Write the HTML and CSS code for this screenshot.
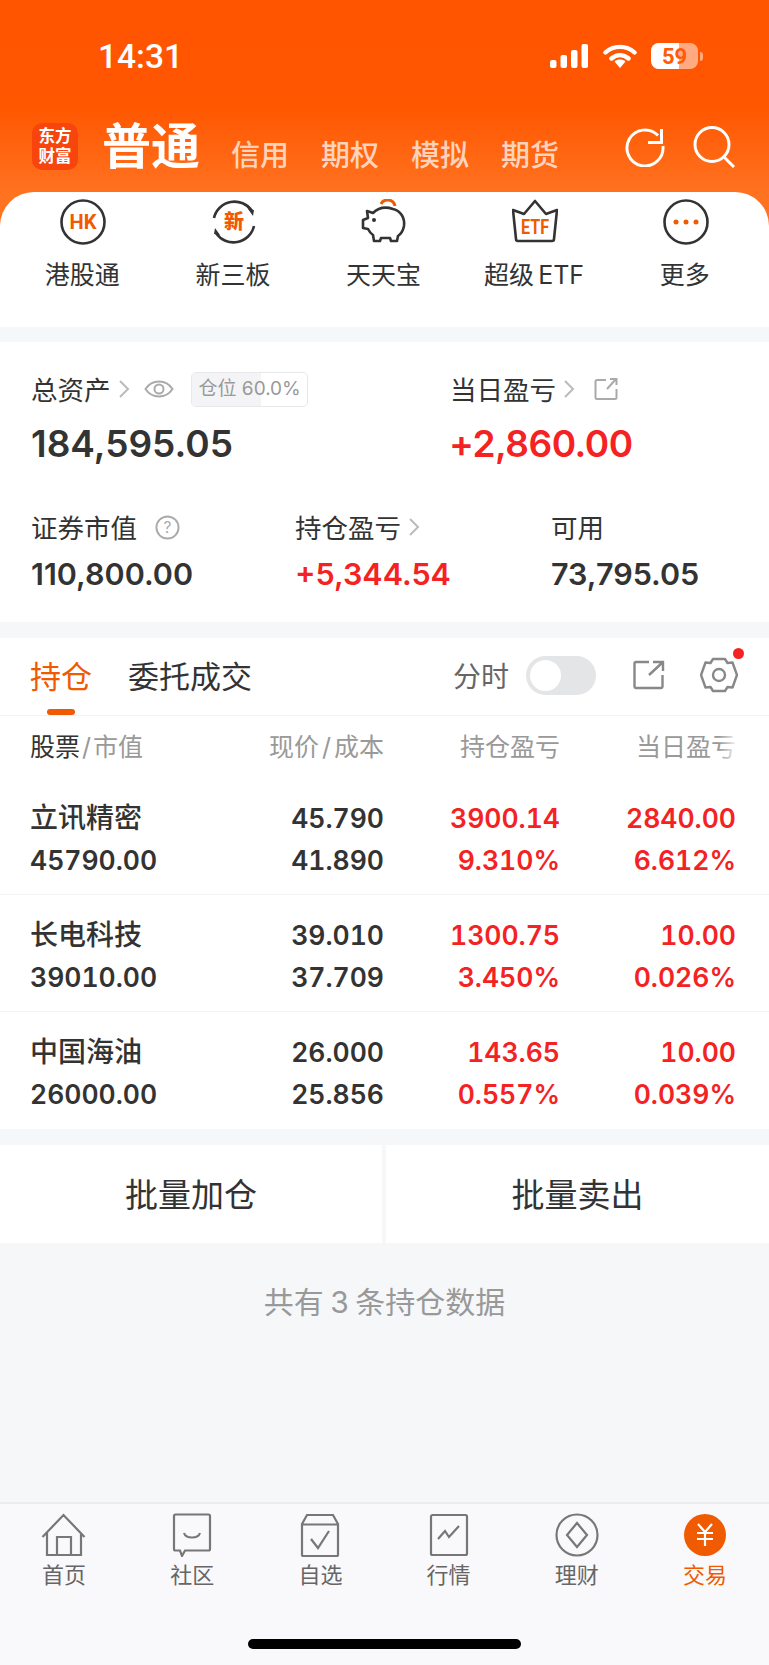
FILE: index.html
```html
<!DOCTYPE html>
<html lang="zh">
<head>
<meta charset="utf-8">
<title>交易</title>
<link rel="stylesheet" href="styles.css">
</head>
<body>
<div class="app">
  <header class="top">
    <div class="status">
      <span class="time">14:31</span>
      <div class="status-icons">
        <svg class="i-signal" viewBox="0 0 38 24"><rect x="0" y="16" width="6.5" height="8" rx="2"/><rect x="10.5" y="11" width="6.5" height="13" rx="2"/><rect x="21" y="6" width="6.5" height="18" rx="2"/><rect x="31.5" y="0" width="6.5" height="24" rx="2"/></svg>
        <svg class="i-wifi" viewBox="0 0 34 24"><path d="M2.5 8.5C10.5 1 23.5 1 31.5 8.5M8.5 14.5C13.5 10 20.5 10 25.5 14.5" fill="none" stroke="#fff" stroke-width="4.4" stroke-linecap="round"/><path d="M17 24l-5.5-6.5c3-2.6 8-2.6 11 0z" fill="#fff"/></svg>
        <div class="battery"><div class="battery-body"><span class="battery-fill"></span><span class="battery-text">59</span></div><span class="battery-nub"></span></div>
      </div>
    </div>
    <div class="brand-row">
      <div class="logo"><span>东方</span><span>财富</span></div>
      <span class="acct-main">普通</span>
      <nav class="acct-tabs"><span>信用</span><span>期权</span><span>模拟</span><span>期货</span></nav>
      <div class="top-actions">
        <svg class="i-refresh" viewBox="0 0 40 40"><path d="M33 8.5A18 18 0 1 0 37.900 19" fill="none" stroke="#fff" stroke-width="3"/><path d="M36.500 2V15.500H23" fill="none" stroke="#fff" stroke-width="3"/></svg>
        <svg class="i-search" viewBox="0 0 42 42"><ellipse cx="19" cy="18.5" rx="17" ry="17" fill="none" stroke="#fff" stroke-width="3"/><path d="M31 31l10 10" fill="none" stroke="#fff" stroke-width="3"/></svg>
      </div>
    </div>
  </header>

  <section class="quick">
    <div class="quick-item">
      <svg class="q-icon" viewBox="0 0 46 46"><circle cx="23" cy="23" r="21.5" class="s-dark"/><text x="23" y="30" textLength="27" lengthAdjust="spacingAndGlyphs" class="t-hk">HK</text></svg>
      <span>港股通</span>
    </div>
    <div class="quick-item">
      <svg class="q-icon" viewBox="0 0 46 46"><path d="M3 19A21 21 0 0 1 41 12M43 27A21 21 0 0 1 5 34" class="s-dark"/><path d="M37 10l6 1-1 6zM9 36l-6-1 1-6z" fill="#333"/><text x="23" y="30" class="t-xin">新</text></svg>
      <span>新三板</span>
    </div>
    <div class="quick-item">
      <svg class="q-icon" viewBox="0 0 46 46"><path d="M20 5a7.500 7.500 0 0 1 14 2" fill="none" stroke="#f05a00" stroke-width="3"/><path d="M7 19l-1-7 6 2c6-6 14-6 20-4 8 2 12 9 11 17-1 5-3 8-6 10l-1 5h-6l-1-3h-9l-1 3h-6l-1-6c-3-2-4-4-5-6l-5-1v-8z" class="s-dark-thin"/><circle cx="13" cy="21" r="2" fill="#333"/></svg>
      <span>天天宝</span>
    </div>
    <div class="quick-item">
      <svg class="q-icon" viewBox="0 0 46 46"><path d="M1 11l11 4L23 2l11 13 11-4-3 29a2 2 0 0 1-2 2H6a2 2 0 0 1-2-2z" class="s-dark-thin"/><text x="23" y="35" textLength="28" lengthAdjust="spacingAndGlyphs" class="t-etf">ETF</text></svg>
      <span class="tight">超级 ETF</span>
    </div>
    <div class="quick-item">
      <svg class="q-icon" viewBox="0 0 46 46"><circle cx="23" cy="23" r="21.500" class="s-dark"/><circle cx="13" cy="23" r="2.500" fill="#f05a00"/><circle cx="23" cy="23" r="2.500" fill="#f05a00"/><circle cx="33" cy="23" r="2.500" fill="#f05a00"/></svg>
      <span>更多</span>
    </div>
  </section>

  <section class="assets">
    <div class="assets-top">
      <div class="cell cell-total">
        <div class="label">总资产
          <svg class="chev" viewBox="0 0 12 20"><path d="M2 2l8 8-8 8"/></svg>
          <svg class="i-eye" viewBox="0 0 30 20"><path d="M1.500 10C8 0 22 0 28.500 10 22 20 8 20 1.500 10z" class="s-gray"/><circle cx="15" cy="10" r="4.500" class="s-gray"/></svg>
          <span class="tag"><span class="tag-fill"></span><span class="tag-text">仓位 60.0%</span></span>
        </div>
        <div class="big">184,595.05</div>
      </div>
      <div class="cell cell-day">
        <div class="label">当日盈亏
          <svg class="chev" viewBox="0 0 12 20"><path d="M2 2l8 8-8 8"/></svg>
          <svg class="i-share-sm" viewBox="0 0 24 24"><path d="M12 3H3a1.500 1.500 0 0 0-1.500 1.500v16A1.500 1.500 0 0 0 3 22h18a1.500 1.500 0 0 0 1.500-1.500V12M13 12L22 2M16 2h6.500v6" class="s-gray"/></svg>
        </div>
        <div class="big red">+2,860.00</div>
      </div>
    </div>
    <div class="assets-bottom">
      <div class="cell">
        <div class="label">证券市值
          <svg class="i-help" viewBox="0 0 26 26"><circle cx="13" cy="13" r="11.500" class="s-gray"/><text x="13" y="19" class="t-help">?</text></svg>
        </div>
        <div class="mid">110,800.00</div>
      </div>
      <div class="cell">
        <div class="label">持仓盈亏
          <svg class="chev" viewBox="0 0 12 20"><path d="M2 2l8 8-8 8"/></svg>
        </div>
        <div class="mid red">+5,344.54</div>
      </div>
      <div class="cell">
        <div class="label">可用</div>
        <div class="mid">73,795.05</div>
      </div>
    </div>
  </section>

  <section class="holdings">
    <div class="tabs">
      <div class="tab tab-on">持仓</div>
      <div class="tab">委托成交</div>
      <div class="tab-tools">
        <span class="fen">分时</span>
        <span class="toggle"><span class="knob"></span></span>
        <svg class="i-share" viewBox="0 0 32 30"><path d="M16 2H3a1.500 1.500 0 0 0-1.500 1.500v23A1.500 1.500 0 0 0 3 28h25a1.500 1.500 0 0 0 1.500-1.500V15M16 15L30 2M20 2h10v9" class="s-mid"/></svg>
        <span class="gear-wrap">
          <svg class="i-gear" viewBox="0 0 38 36"><path d="M13 2h12l2.500 4 5-.5L37 18l-4.500 12.500-5-.5-2.500 4H13l-2.500-4-5 .5L1 18 5.500 5.500l5 .5z" class="s-mid" stroke-linejoin="round"/><ellipse cx="19" cy="18" rx="6" ry="6" class="s-mid"/></svg>
          <span class="dot"></span>
        </span>
      </div>
    </div>
    <div class="thead">
      <div class="th-name"><span class="dark">股票</span><i>/</i>市值</div>
      <div>现价<i>/</i>成本</div>
      <div>持仓盈亏</div>
      <div class="th-fade">当日盈亏</div>
    </div>
    <div class="row">
      <div class="c-name"><b>立讯精密</b><span>45790.00</span></div>
      <div class="c-num"><span>45.790</span><span>41.890</span></div>
      <div class="c-num red"><span>3900.14</span><span>9.310%</span></div>
      <div class="c-num red"><span>2840.00</span><span>6.612%</span></div>
    </div>
    <div class="row">
      <div class="c-name"><b>长电科技</b><span>39010.00</span></div>
      <div class="c-num"><span>39.010</span><span>37.709</span></div>
      <div class="c-num red"><span>1300.75</span><span>3.450%</span></div>
      <div class="c-num red"><span>10.00</span><span>0.026%</span></div>
    </div>
    <div class="row">
      <div class="c-name"><b>中国海油</b><span>26000.00</span></div>
      <div class="c-num"><span>26.000</span><span>25.856</span></div>
      <div class="c-num red"><span>143.65</span><span>0.557%</span></div>
      <div class="c-num red"><span>10.00</span><span>0.039%</span></div>
    </div>
  </section>

  <section class="batch">
    <div>批量加仓</div>
    <div>批量卖出</div>
  </section>

  <p class="count">共有 3 条持仓数据</p>

  <footer class="bottom">
    <nav class="tabbar">
      <div class="bar-item">
        <svg viewBox="0 0 46 44"><path d="M1.500 24L22.500 2l21 22M6 20v22h34V20M16 42V24h14v18" class="s-nav"/></svg>
        <span>首页</span>
      </div>
      <div class="bar-item">
        <svg viewBox="0 0 46 44"><path d="M5 3a1.500 1.500 0 0 1 1.500-1.500h33A1.500 1.500 0 0 1 41 3v33a1.500 1.500 0 0 1-1.500 1.500H16L13 43l-2-5.500H6.500A1.500 1.500 0 0 1 5 36z" class="s-nav"/><path d="M15 20c2 6 14 6 16 0" class="s-nav"/></svg>
        <span>社区</span>
      </div>
      <div class="bar-item">
        <svg viewBox="0 0 46 44"><path d="M5 11.500h36M5 42V11L10 2h26l5 9v31a1 1 0 0 1-1 1H6a1 1 0 0 1-1-1z" class="s-nav"/><path d="M14 26l7 9 11-17" class="s-nav"/></svg>
        <span>自选</span>
      </div>
      <div class="bar-item">
        <svg viewBox="0 0 46 44"><rect x="5" y="2" width="36" height="40" rx="1.500" class="s-nav"/><path d="M12 26l7-8 4 6 10-11" class="s-nav"/></svg>
        <span>行情</span>
      </div>
      <div class="bar-item">
        <svg viewBox="0 0 46 44"><circle cx="23" cy="22" r="20.500" class="s-nav"/><path d="M23 10l10 12-10 12-10-12z" class="s-nav"/></svg>
        <span>理财</span>
      </div>
      <div class="bar-item bar-on">
        <svg viewBox="0 0 46 44"><circle cx="23" cy="22" r="21" fill="#f05a00"/><path d="M16 11l7 8 7-8M15 20h16M15 26h16M23 19v14" fill="none" stroke="#fff" stroke-width="2.200"/></svg>
        <span>交易</span>
      </div>
    </nav>
    <div class="home-wrap"><span class="home-bar"></span></div>
  </footer>
</div>
</body>
</html>
```
FILE: styles.css
```css
* { box-sizing: border-box; margin: 0; padding: 0; }
html, body { height: 100%; }
body {
  font-family: Inter, Roboto, "Noto Sans CJK SC", sans-serif;
  background: #f6f7f9;
  color: #333;
  overflow: hidden;
}
.app { width: 769px; height: 1665px; display: flex; flex-direction: column; overflow: hidden; }

/* Header */
.top {
  height: 232px;
  background: linear-gradient(180deg, #ff5500 0%, #ff5600 45%, #ff7220 83%, #ff7220 100%);
  color: #fff;
  flex: none;
}
.status { height: 123px; padding: 38px 66px 0 98px; display: flex; justify-content: space-between; align-items: flex-start; }
.time { font-family: Roboto, sans-serif; font-weight: 500; font-size: 33.500px; line-height: 38px; }
.status-icons { display: flex; align-items: center; gap: 15px; height: 36px; }
.i-signal { width: 38px; height: 24px; fill: #fff; }
.i-wifi { width: 34px; height: 24px; }
.battery { display: flex; align-items: center; margin-left: -1px; }
.battery-body { width: 47px; height: 26px; border-radius: 8px; background: rgba(255,255,255,.5); overflow: hidden; display: flex; position: relative; align-items: center; justify-content: center; }
.battery-fill { position: absolute; left: 0; top: 0; bottom: 0; width: 28px; background: #fff; }
.battery-text { position: relative; font-family: Roboto, sans-serif; font-weight: 700; font-size: 22px; color: #ff5a08; }
.battery-nub { width: 3px; height: 9px; margin-left: 2px; background: rgba(255,255,255,.5); border-radius: 0 3px 3px 0; }

.brand-row { display: flex; align-items: flex-start; padding-left: 32px; }
.logo { width: 46px; height: 47px; border-radius: 10px; background: #f8450e; display: flex; flex-direction: column; align-items: center; justify-content: center; font-family: Roboto, "Noto Sans CJK SC", sans-serif; font-weight: 700; font-size: 16.500px; line-height: 20px; color: #fff; }
.logo span { display: block; }
.acct-main { margin-left: 24px; margin-top: -3px; font-family: "Noto Sans CJK SC", sans-serif; font-weight: 700; font-size: 49px; line-height: 46px; }
.acct-tabs { display: flex; gap: 32px; margin-left: 31px; padding-top: 11px; font-family: "Noto Sans CJK SC", sans-serif; font-size: 29px; font-weight: 500; line-height: 38px; color: rgba(255,255,255,.72); }
.top-actions { display: flex; gap: 28px; margin-left: auto; padding-right: 34px; padding-top: 4px; }
.i-refresh { width: 40px; height: 40px; }
.i-search { width: 42px; height: 42px; margin-top: -1px; }

/* Quick entries */
.quick {
  flex: none;
  margin-top: -40px;
  height: 135px;
  background: #fff;
  border-radius: 34px 34px 0 0;
  padding: 7px 8px 0;
  display: grid;
  grid-template-columns: repeat(5, 1fr);
  font-family: "Noto Sans CJK SC", sans-serif;
}
.quick-item { display: flex; flex-direction: column; align-items: center; font-size: 25px; line-height: 36px; color: #333; }
.quick-item span { margin-top: 12px; padding-right: 2px; font-family: Inter, "Noto Sans CJK SC", sans-serif; }
.quick-item .tight { word-spacing: -3px; }
.q-icon { width: 46px; height: 46px; }
.s-dark { fill: none; stroke: #333; stroke-width: 2.600; }
.s-dark-thin { fill: none; stroke: #333; stroke-width: 2.600; stroke-linejoin: round; }
.s-gray { fill: none; stroke: #aaa; stroke-width: 2; }
.s-mid { fill: none; stroke: #888; stroke-width: 2.400; }
.s-nav { fill: none; stroke: #777; stroke-width: 2.200; }
.t-hk, .t-etf, .t-xin, .t-help { text-anchor: middle; }
.t-hk { font-family: Roboto, sans-serif; font-size: 21px; font-weight: 700; fill: #f05a00; }
.t-etf { font-family: Roboto, sans-serif; font-size: 21px; font-weight: 700; fill: #f05a00; }
.t-xin { font-family: "Noto Sans CJK SC", sans-serif; font-size: 20px; font-weight: 900; fill: #f05a00; }
.t-help { font-family: Inter, sans-serif; font-size: 16px; fill: #aaa; }

/* Assets */
.assets { flex: none; margin-top: 15px; height: 280px; background: #fff; padding: 28px 0 0 31px; }
.assets-top { display: grid; grid-template-columns: 419px 1fr; height: 138px; }
.assets-bottom { display: grid; grid-template-columns: 264px 256px 1fr; }
.label { display: flex; align-items: center; font-family: "Noto Sans CJK SC", sans-serif; font-size: 26.500px; line-height: 38px; color: #333; height: 38px; white-space: nowrap; }
.chev { width: 12px; height: 20px; margin-left: 7px; }
.chev path { fill: none; stroke: #bbb; stroke-width: 2; }
.i-eye { width: 30px; height: 20px; margin-left: 14px; }
.tag { position: relative; display: flex; align-items: center; margin-left: 17px; width: 117px; height: 35px; border: 1px solid #e8e8ea; border-radius: 5px; overflow: hidden; }
.tag-fill { position: absolute; left: 0; top: 0; bottom: 0; width: 60%; background: #f4f4f6; }
.tag-text { position: relative; padding-left: 7px; font-size: 19px; font-family: Inter, "Noto Sans CJK SC", sans-serif; color: #999; }
.i-share-sm { width: 24px; height: 24px; margin-left: 19px; }
.big { font-size: 37px; font-weight: 600; line-height: 48px; margin-top: 12px; }
.big.red { letter-spacing: -.5px; margin-left: -1px; }
.mid { font-size: 30.500px; font-weight: 600; line-height: 38px; margin-top: 9px; }
.red { color: #f42222; }
.i-help { width: 25px; height: 25px; margin-left: 18px; }

/* Holdings */
.holdings { flex: none; margin-top: 16px; height: 491px; background: #fff; }
.tabs { height: 78px; display: flex; align-items: flex-start; padding: 15px 31px 0 30px; gap: 36px; border-bottom: 1px solid #f2f3f5; font-family: "Noto Sans CJK SC", sans-serif; }
.tab { position: relative; font-size: 31px; line-height: 44px; color: #333; }
.tab-on { color: #f05a00; }
.tab-on::after { content: ""; position: absolute; left: 17px; width: 28px; top: 56px; height: 6px; border-radius: 3px; background: #f05a00; }
.tab-tools { margin-left: auto; display: flex; align-items: center; height: 44px; }
.fen { font-size: 28px; color: #666; }
.toggle { margin-left: 17px; width: 70px; height: 39px; border-radius: 20px; background: #e4e5e7; padding: 4px; }
.knob { display: block; width: 31px; height: 31px; border-radius: 50%; background: #fff; }
.i-share { width: 32px; height: 30px; margin-left: 37px; }
.gear-wrap { position: relative; margin-left: 35px; display: block; width: 38px; height: 36px; }
.i-gear { width: 38px; height: 36px; }
.dot { position: absolute; right: -6px; top: -9px; width: 11px; height: 11px; border-radius: 50%; background: #f42222; }

.thead, .row { display: grid; grid-template-columns: 1fr 160px 176px 176px; padding: 0 33px 0 30px; }
.thead { height: 62px; padding-bottom: 5px; align-items: center; font-family: Inter, "Noto Sans CJK SC", sans-serif; font-size: 25px; color: #999; text-align: right; position: relative; }
.thead i { font-style: normal; margin: 0 3px; }
.thead .th-name i { margin: 0 2px; }
.th-name { text-align: left; }
.dark { color: #333; }
.th-fade::after { content: ""; position: absolute; right: 28px; top: 10px; bottom: 10px; width: 22px; background: linear-gradient(90deg, rgba(255,255,255,0), #fff 90%); }
.row { height: 117px; align-items: stretch; padding-top: 19px; border-bottom: 1px solid #f2f3f5; font-weight: 600; font-variant-numeric: tabular-nums; }
.row:last-child { border-bottom: 0; }
.c-name, .c-num { display: flex; flex-direction: column; font-size: 26.500px; line-height: 42px; }
.c-num { text-align: right; }
.c-name b { font-family: "Noto Sans CJK SC", sans-serif; font-weight: 500; font-size: 28px; line-height: 38px; margin-bottom: 4px; }

/* Batch */
.batch { flex: none; margin-top: 16px; height: 98px; display: grid; grid-template-columns: 382px 1fr; gap: 4px; font-family: "Noto Sans CJK SC", sans-serif; font-size: 33px; color: #333; }
.batch div { background: #fff; display: flex; align-items: center; justify-content: center; padding-bottom: 3px; }

.count { flex: none; margin-top: 36px; text-align: center; font-family: Inter, "Noto Sans CJK SC", sans-serif; font-size: 30px; line-height: 46px; color: #999; word-spacing: -2px; }

/* Bottom */
.bottom { margin-top: auto; flex: none; height: 163px; background: #f9f9fb; border-top: 2px solid #ececee; }
.tabbar { display: grid; grid-template-columns: repeat(6, 1fr); padding-top: 9px; }
.bar-item { display: flex; flex-direction: column; align-items: center; font-family: "Noto Sans CJK SC", sans-serif; font-size: 22px; line-height: 30px; color: #666; }
.bar-item svg { width: 46px; height: 44px; }
.bar-item span { margin-top: 1px; }
.bar-on { color: #f05a00; }
.home-wrap { display: flex; justify-content: center; padding-top: 51px; }
.home-bar { width: 273px; height: 10px; background: #000; border-radius: 5px; }
```
